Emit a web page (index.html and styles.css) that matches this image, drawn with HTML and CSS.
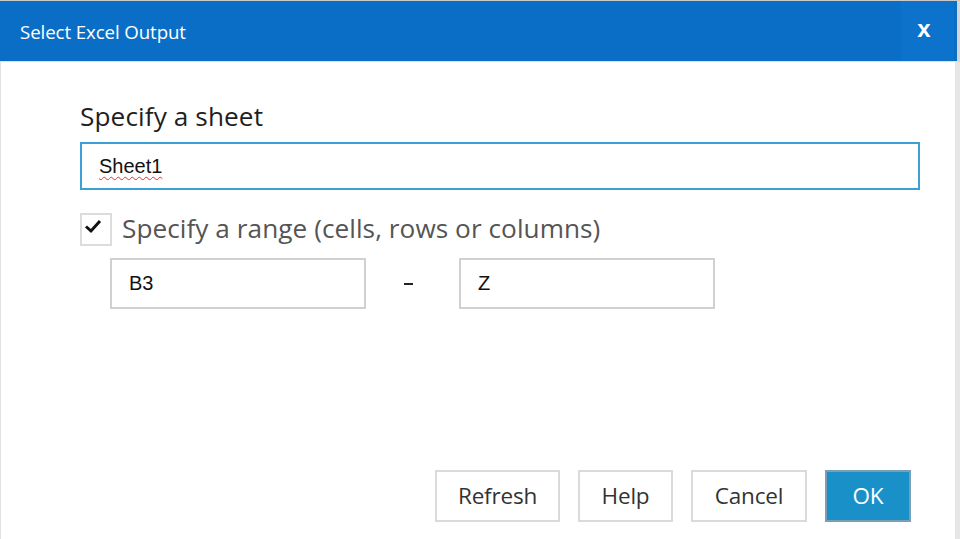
FILE: index.html
```html
<!DOCTYPE html>
<html>
<head>
<meta charset="utf-8">
<link rel="stylesheet" href="styles.css">
</head>
<body>
<div class="dialog">
  <div class="titlebar">
    <span class="title">Select Excel Output</span>
    <span class="close">x</span>
  </div>
  <div class="body">
    <div class="content">
      <div class="label">Specify a sheet</div>
      <div class="input focused"><span class="spell">Sheet1</span></div>
      <div class="check-row">
        <span class="checkbox">
          <svg width="20" height="16" viewBox="0 0 20 16"><path d="M3 8.5 L8 13 L17 3" fill="none" stroke="#111" stroke-width="3"/></svg>
        </span>
        <span class="check-label">Specify a range (cells, rows or columns)</span>
      </div>
      <div class="range-row">
        <div class="input small">B3</div>
        <span class="dash-cell"><span class="dash"></span></span>
        <div class="input small">Z</div>
      </div>
    </div>
    <div class="buttons">
      <button class="btn btn-refresh">Refresh</button>
      <button class="btn btn-help">Help</button>
      <button class="btn btn-cancel">Cancel</button>
      <button class="btn btn-ok primary">OK</button>
    </div>
  </div>
</div>
</body>
</html>
```
FILE: styles.css
```css
html, body {
  margin: 0;
  padding: 0;
  background: #ffffff;
}
.dialog {
  width: 960px;
  height: 539px;
  box-sizing: border-box;
  border-top: 1px solid #c9c9c9;
  display: flex;
  flex-direction: column;
  font-family: "Open Sans", "Noto Sans", sans-serif;
}
.titlebar {
  height: 60px;
  background: #0a6ec6;
  display: flex;
  align-items: center;
  justify-content: space-between;
  border-right: 3px solid #d6d6d6;
  border-bottom: 1px solid #d8e2ec;
}
.title {
  color: #ffffff;
  font-size: 18.7px;
  padding-left: 20px;
  letter-spacing: -0.1px;
}
.close {
  width: 53px;
  height: 60px;
  margin-right: 3px;
  background: #0c72cc;
  color: #ffffff;
  font-family: "Liberation Sans", Arial, sans-serif;
  font-weight: bold;
  font-size: 24px;
  display: flex;
  align-items: center;
  justify-content: center;
  padding: 0 7px 4px 0;
  box-sizing: border-box;
}
.body {
  flex: 1;
  display: flex;
  flex-direction: column;
  justify-content: space-between;
  border-left: 1px solid #e2e2e2;
  border-right: 5px solid #e6e6e6;
  padding: 0 0 17px 0;
}
.content {
  padding: 37px 35px 0 79px;
  display: flex;
  flex-direction: column;
}
.label {
  font-size: 26.2px;
  color: #1f1f1f;
  line-height: 34px;
  letter-spacing: 0.1px;
}
.input {
  box-sizing: border-box;
  height: 48px;
  border: 2px solid #3ba0d3;
  margin-top: 9px;
  padding-left: 17px;
  display: flex;
  align-items: center;
  font-family: "Liberation Sans", Arial, sans-serif;
  font-size: 20px;
  color: #111;
}
.spell {
  text-decoration: underline wavy #e03030;
  text-decoration-thickness: 1px;
  text-underline-offset: 3px;
}
.check-row {
  display: flex;
  align-items: center;
  margin-top: 21px;
}
.checkbox {
  width: 32px;
  height: 33px;
  box-sizing: border-box;
  border: 2px solid #dcdcdc;
  display: flex;
  align-items: center;
  justify-content: center;
  padding-bottom: 6px;
  padding-right: 6px;
}
.check-label {
  font-size: 26.2px;
  color: #555555;
  margin-left: 10px;
  letter-spacing: 0.05px;
  line-height: 34px;
  padding-bottom: 2px;
}
.range-row {
  display: flex;
  align-items: center;
  margin-left: 30px;
  margin-top: 11px;
}
.input.small {
  width: 256px;
  height: 51px;
  margin-top: 0;
  border: 2px solid #d0d0d0;
  padding-left: 17px;
}
.dash-cell {
  width: 93px;
  display: flex;
  justify-content: center;
  padding-right: 8px;
  box-sizing: border-box;
}
.dash {
  width: 9px;
  height: 2px;
  background: #222;
}
.buttons {
  display: flex;
  justify-content: flex-end;
  gap: 18px;
  padding-right: 44px;
}
.btn {
  height: 52px;
  box-sizing: border-box;
  border: 2px solid #dadada;
  background: #ffffff;
  font-family: "Open Sans", "Noto Sans", sans-serif;
  font-size: 22.5px;
  color: #333;
  padding: 0 0 2px;
  letter-spacing: -0.2px;
  text-align: center;
}
.btn-refresh { width: 125px; }
.btn-help { width: 95px; }
.btn-cancel { width: 116px; }
.btn-ok { width: 86px; }
.btn.primary {
  background: #1991c8;
  border-color: #7a9fb5;
  color: #ffffff;
}
```
